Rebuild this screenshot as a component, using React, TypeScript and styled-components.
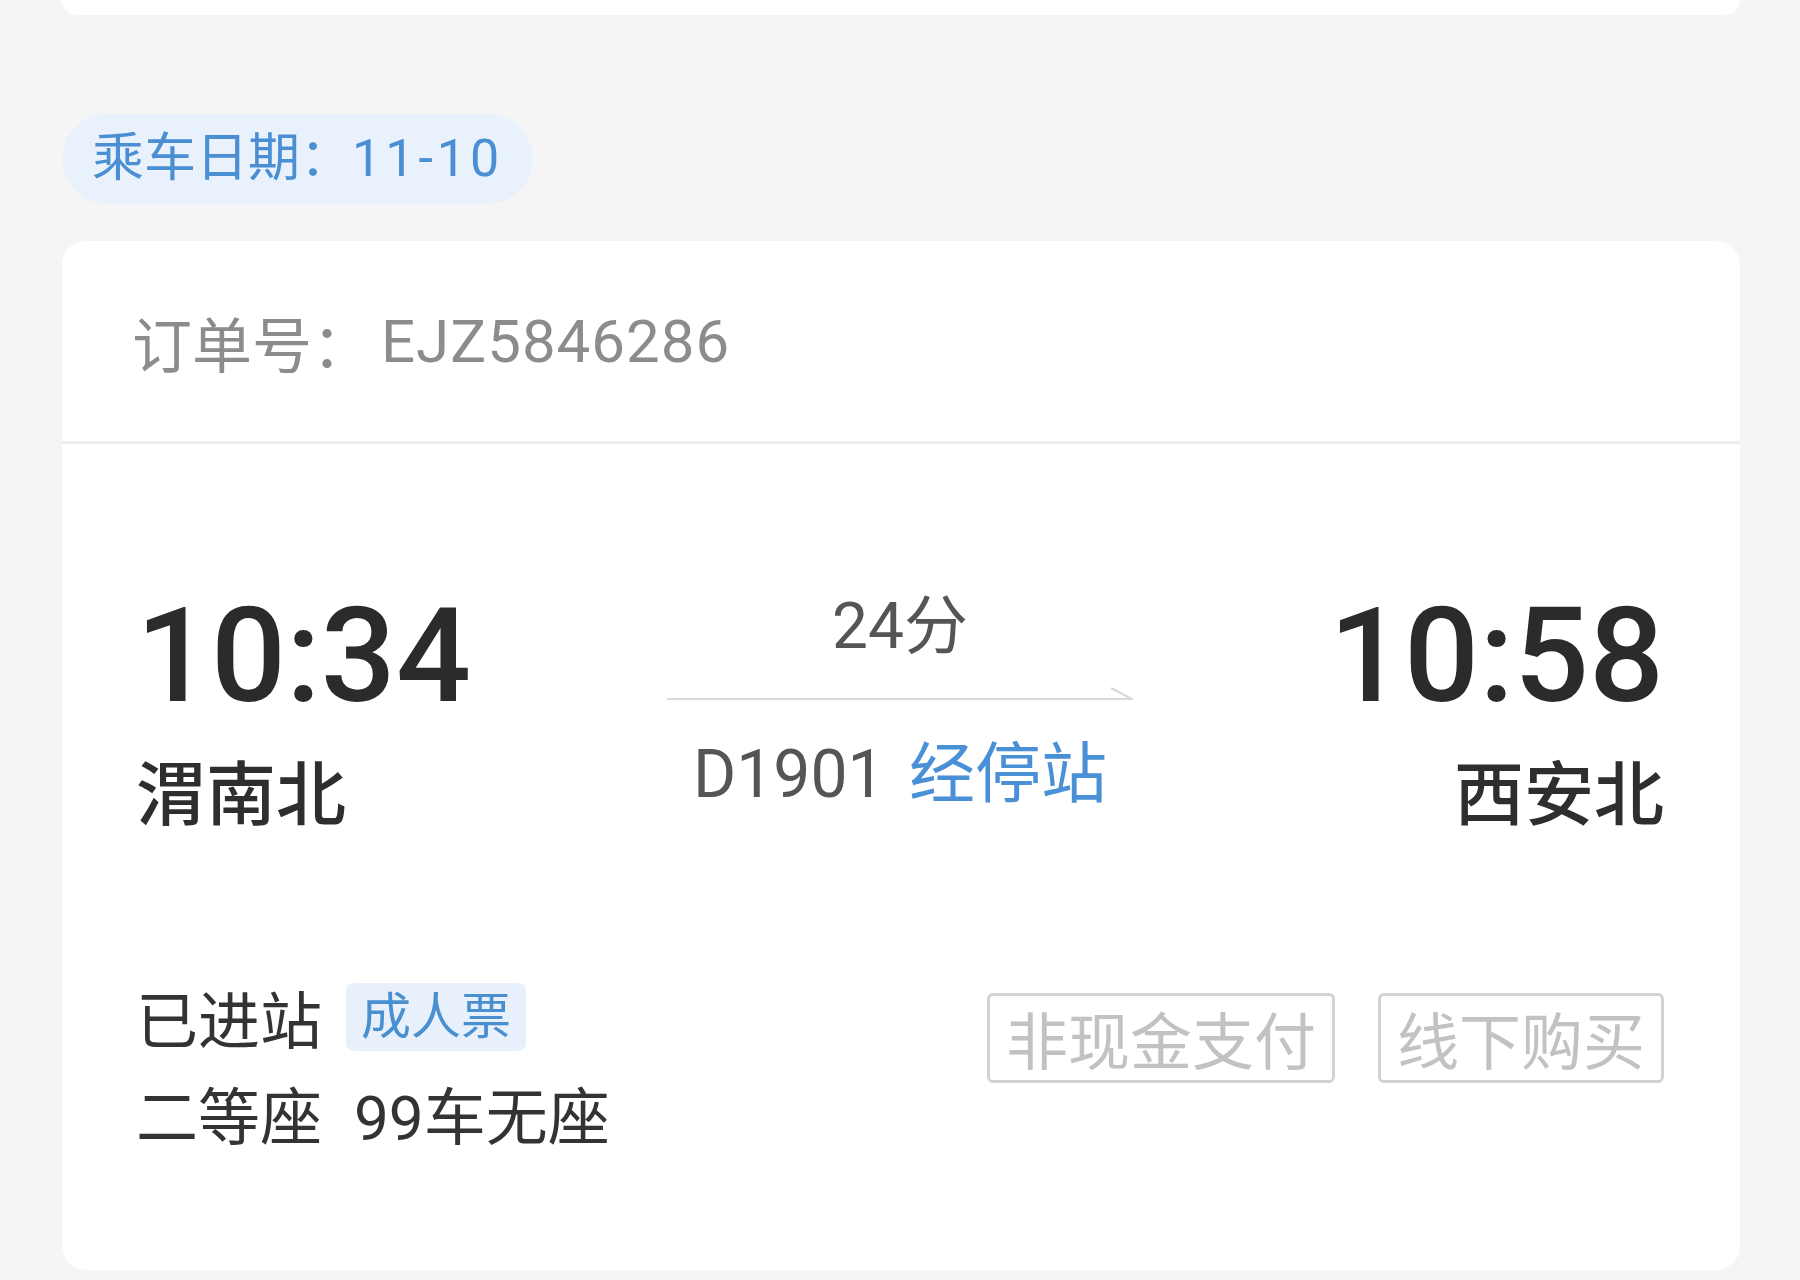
import React from 'react';
import styled, { createGlobalStyle } from 'styled-components';

const GlobalStyle = createGlobalStyle`
    html, body {
        margin: 0;
        padding: 0;
        background: #f5f5f5;
    }
    body {
        font-family: Roboto, "Noto Sans CJK SC", sans-serif;
        color: #2e2e2e;
    }
    * {
        box-sizing: border-box;
    }
`

const App = () => {
    return (
        <>
            <GlobalStyle />
            <Page>
                <PrevCard />

                <DatePill>乘车日期：<Digits $spacing={4}>11-10</Digits></DatePill>

                <TicketCard>
                    <OrderHeader>订单号：<Digits $spacing={1} $gap={9}>EJZ5846286</Digits></OrderHeader>

                    <TicketBody>
                        <RouteRow>
                            <StationCol>
                                <Time>10:34</Time>
                                <Station>渭南北</Station>
                            </StationCol>

                            <MiddleCol>
                                <Duration>24分</Duration>
                                <ArrowLine width="466" height="14" viewBox="0 0 466 14">
                                    <line x1="0" y1="12" x2="466" y2="12" stroke="#dadada" strokeWidth="2" />
                                    <line x1="444" y1="1" x2="465" y2="12" stroke="#dadada" strokeWidth="2" />
                                </ArrowLine>
                                <TrainNo>
                                    D1901 <StopsLink>经停站</StopsLink>
                                </TrainNo>
                            </MiddleCol>

                            <StationCol $align="end">
                                <Time>10:58</Time>
                                <Station>西安北</Station>
                            </StationCol>
                        </RouteRow>

                        <InfoRow>
                            <InfoCol>
                                <StatusLine>
                                    已进站
                                    <TicketTag>成人票</TicketTag>
                                </StatusLine>
                                <SeatLine>
                                    二等座<SeatNo>99车无座</SeatNo>
                                </SeatLine>
                            </InfoCol>

                            <Actions>
                                <GhostButton>非现金支付</GhostButton>
                                <GhostButton>线下购买</GhostButton>
                            </Actions>
                        </InfoRow>
                    </TicketBody>
                </TicketCard>
            </Page>
        </>
    )
}

export default App

const Page = styled.div`
    width: 1800px;
    height: 1280px;
    overflow: hidden;
    padding: 0 60px 0 62px;
    display: flex;
    flex-direction: column;
    align-items: flex-start;
`

const PrevCard = styled.div`
    width: 100%;
    height: 15px;
    background: #ffffff;
    border-radius: 0 0 24px 24px;
    flex-shrink: 0;
`

const DatePill = styled.div`
    margin-top: 99px;
    height: 90px;
    padding: 0 30px 0 30px;
    border-radius: 45px;
    background: #e9f2fc;
    color: #4a8fd3;
    font-size: 52px;
    line-height: 90px;
    white-space: nowrap;
    flex-shrink: 0;
`

const Digits = styled.span<{ $spacing: number; $gap?: number }>`
    letter-spacing: ${p => p.$spacing}px;
    margin-left: ${p => p.$gap || 0}px;
`

const TicketCard = styled.div`
    margin-top: 37px;
    width: 100%;
    background: #ffffff;
    border-radius: 24px;
    flex-shrink: 0;
`

const OrderHeader = styled.div`
    height: 203px;
    padding-left: 70px;
    display: flex;
    align-items: center;
    font-size: 60px;
    color: #8c8c8c;
    border-bottom: 3px solid #ededed;
`

const TicketBody = styled.div`
    padding: 146px 76px 120px 74px;
`

const RouteRow = styled.div`
    display: grid;
    grid-template-columns: 1fr auto 1fr;
    align-items: start;
`

const StationCol = styled.div<{ $align?: 'start' | 'end' }>`
    display: flex;
    flex-direction: column;
    align-items: ${p => p.$align === 'end' ? 'flex-end' : 'flex-start'};
`

const Time = styled.div`
    font-family: Roboto, sans-serif;
    font-weight: 500;
    font-size: 132px;
    line-height: 132px;
    color: #2b2b2b;
`

const Station = styled.div`
    margin-top: 33px;
    font-family: "Noto Sans CJK SC", sans-serif;
    font-weight: 500;
    font-size: 70px;
    line-height: 70px;
    color: #2e2e2e;
`

const MiddleCol = styled.div`
    width: 466px;
    padding-top: 5px;
    display: flex;
    flex-direction: column;
    align-items: center;
`

const Duration = styled.div`
    font-size: 64px;
    line-height: 64px;
    color: #555555;
`

const ArrowLine = styled.svg`
    display: block;
    margin-top: 28px;
`

const TrainNo = styled.div`
    margin-top: 41px;
    font-size: 66px;
    line-height: 66px;
    color: #555555;
    white-space: nowrap;
`

const StopsLink = styled.span`
    margin-left: 8px;
    color: #4a90d6;
`

const InfoRow = styled.div`
    margin-top: 158px;
    display: flex;
    justify-content: space-between;
    align-items: flex-start;
`

const InfoCol = styled.div`
    display: flex;
    flex-direction: column;
    gap: 37px;
`

const StatusLine = styled.div`
    display: flex;
    align-items: center;
    height: 68px;
    font-size: 62px;
    color: #333333;
`

const TicketTag = styled.span`
    margin-left: 24px;
    height: 68px;
    padding: 0 15px;
    border-radius: 8px;
    background: #e7f0fb;
    color: #4a8fd0;
    font-size: 50px;
    line-height: 68px;
`

const SeatLine = styled.div`
    font-size: 62px;
    line-height: 62px;
    color: #333333;
    white-space: nowrap;
`

const SeatNo = styled.span`
    margin-left: 32px;
`

const Actions = styled.div`
    margin-top: 10px;
    display: flex;
    gap: 43px;
`

const GhostButton = styled.div`
    height: 90px;
    padding: 0 16px;
    border: 3px solid #d2d2d2;
    border-radius: 6px;
    display: flex;
    align-items: center;
    font-size: 62px;
    color: #c2c2c2;
    white-space: nowrap;
`
